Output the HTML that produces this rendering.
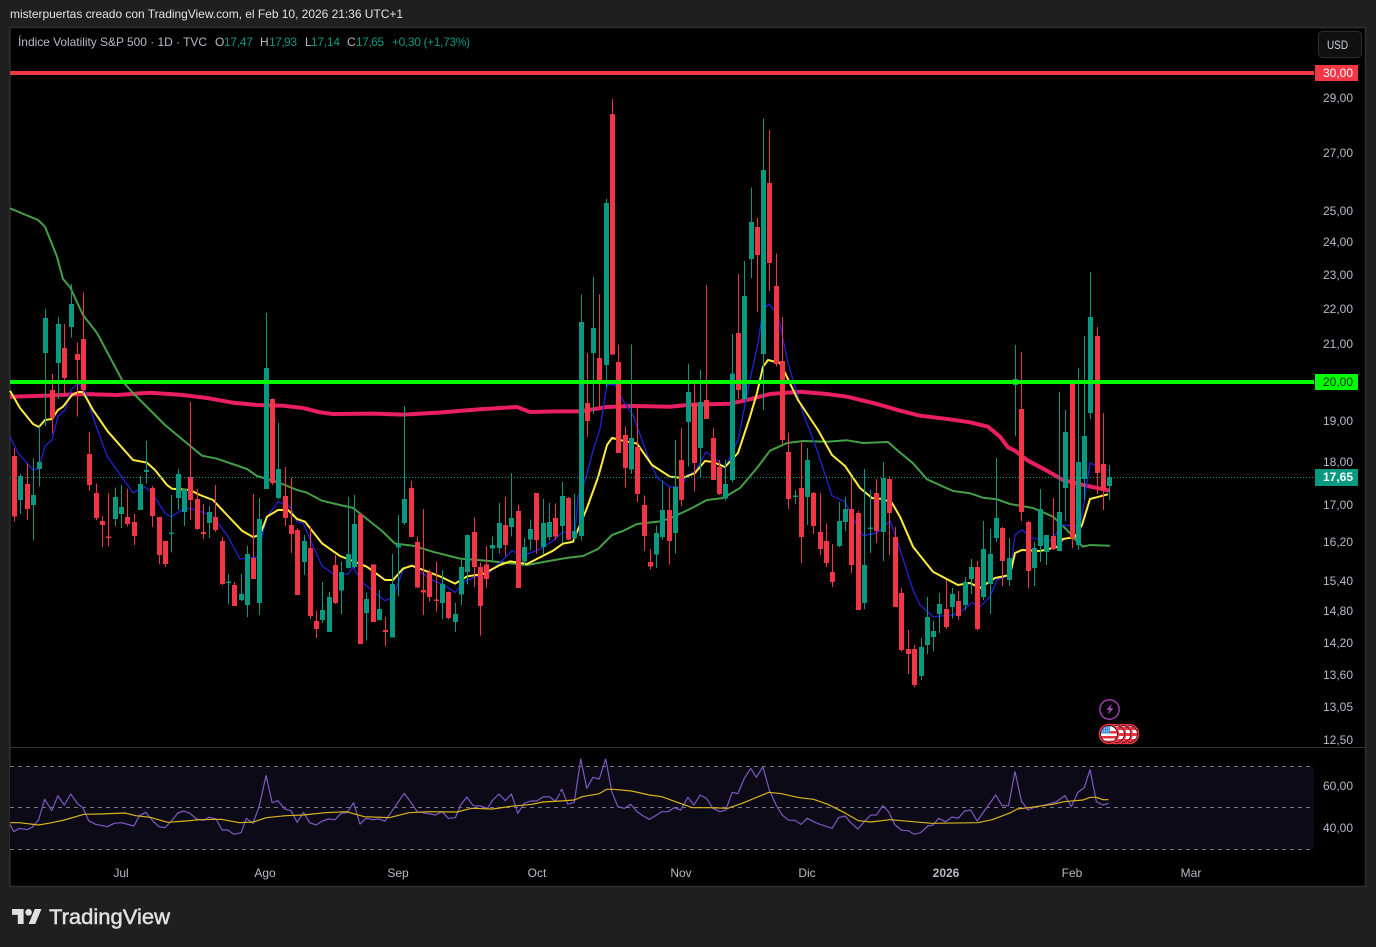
<!DOCTYPE html>
<html><head><meta charset="utf-8"><title>VIX</title>
<style>
html,body{margin:0;padding:0;background:#1f1f1f;width:1376px;height:947px;overflow:hidden}
svg{display:block;font-family:"Liberation Sans",sans-serif}
path,polyline{fill:none}
.w{stroke-width:1;vector-effect:non-scaling-stroke;shape-rendering:crispEdges}
.b{stroke-width:5;vector-effect:non-scaling-stroke;shape-rendering:crispEdges}
.r{stroke:#f23645}.g{stroke:#089981}
.ax text{font-size:12px;fill:#b8bbc4}
.t text{font-size:12px;fill:#b8bbc4;text-anchor:middle}
.lg{font-size:12px}
.rs{stroke-width:1.2;vector-effect:non-scaling-stroke;stroke-linejoin:round}
</style></head><body>
<svg width="1376" height="947" viewBox="0 0 1376 947" xmlns="http://www.w3.org/2000/svg">
<rect width="1376" height="947" fill="#1f1f1f"/>
<text x="10" y="18" font-size="12" fill="#e2e2e2" textLength="393" lengthAdjust="spacing">misterpuertas creado con TradingView.com, el Feb 10, 2026 21:36 UTC+1</text>
<rect x="10" y="27.5" width="1355.5" height="859" fill="#000" stroke="#2e2e2e" stroke-width="1.5"/>

<!-- moving averages -->
<polyline stroke="#e91e63" stroke-width="4" stroke-linejoin="round" points="10,396.7 43,395.7 83,394 117,395 150,392.7 180,394.7 207,398 233,402.7 257,405 283,405.7 303,408 320,412.3 333,414 373,413.6 403,414.6 440,412.5 480,409.3 517,407 530,412 557,411.4 580,411.4 607,407 633,406 670,406.7 690,404.7 730,403.7 750,399.3 770,394 800,391.7 827,394 847,396.7 877,404 900,410.7 920,415.7 950,419.3 970,422.3 988,426.7 1000,436.7 1008,447.3 1015,450.7 1028,460.7 1047,470.7 1063,480 1083,485 1110,490.7"/>
<polyline stroke="#43a047" stroke-width="2" stroke-linejoin="round" points="10,208.3 38,220 45,226.7 57,256.7 63,279 70,287 83,315 97,333 123,381.7 133,393 165,425 177,435 202,455.7 217,458.7 247,469 257,476 280,483 297,490 307,492.7 322,500.7 340,505 353,507.9 382,531 395,543.6 413,545.7 433,551.8 460,558.6 487,560.7 507,563 527,565 547,561.4 567,557.9 583,556 598,549 612,535 623,531 637,524 660,521.4 670,518.3 690,509 707,500 723,498 740,488 757,468 770,450.7 787,443 803,441 827,441.7 847,440.3 863,443 888,442 897,450 913,463.3 927,479.3 953,491 970,493.3 983,497.7 997,499.3 1010,504 1033,508 1053,516.7 1067,530 1077,541.7 1083,546.7 1090,545 1110,545.7"/>
<polyline stroke="#2222d8" stroke-width="1.3" stroke-linejoin="round" points="10,436.7 18,453 33,470 39,468.7 45,446 52,440 58,416.7 65,410 71,390 78,383 85,390.7 95,423 107,456 133,492.7 145,487 152,493 165,513 171,517 185,508 197,510 213,516.7 227,535 240,559 257,557 267,516.7 278,501.7 290,506.7 297,521.7 303,523 322,566 335,575 348,574 353,567 363,583 385,600.7 393,597 403,570 411,565 430,579 443,584.6 455,592.5 465,581 490,572 503,559.6 512,550.7 523,556 540,549 553,540.7 563,532 575,533 578,497 585,481 593,450.7 600,429 607,384.6 615,384.6 623,400.7 633,415 647,454 657,477.5 670,487 682,487 687,475 695,472 706,452 717,460 725,468 738,440 750,380 758,343 763,310 769,304 778,315 788,363 802,410 817,450 832,495.7 845,501.7 853,518 863,535.7 877,533 890,520.7 897,540 913,590 920,605 933,616.7 953,615 963,610 972,602.7 980,606.7 990,596.7 997,580 1010,575 1015,535 1022,530 1032,538 1050,541 1063,525 1080,526.7 1085,496.7 1090,463 1108,470.7"/>
<polyline stroke="#ffeb3b" stroke-width="2" stroke-linejoin="round" points="10,390.7 20,408 33,424 39,427 45,420 52,419 58,410 63,406.7 72,395 78,392 83,392 93,410 108,431.7 133,460 147,462.7 155,470 167,485 172,488.7 190,490 200,495 213,500 227,515 242,530.7 253,537 260,535 267,516.7 278,510 288,510 297,519 305,521.7 322,543.3 340,556 353,561 367,566.8 385,580 393,580 403,568.6 412,565.7 440,576.4 455,583.6 467,576.4 483,574 500,565 510,561.4 527,564 553,550.7 563,543.6 573,541.8 587,507.9 598,477.5 607,445 612,437.9 623,440.7 637,443.6 652,465 670,476.7 683,478 695,473 705,461 713,462 725,467 738,453 750,416.7 757,393 763,366.7 768,360 780,363 785,373 798,400 818,430 832,455 845,466 860,488 872,498 883,499 892,503 900,516.7 913,546.7 933,571.7 958,585 970,583 980,588 995,578 1010,575 1015,553 1022,550 1040,551 1057,547 1063,539 1075,537 1082,525 1090,499 1108,494.3"/>

<!-- candles -->
<g transform="translate(0,200) scale(1,0.33333)">
<path class="w r" d="M14.5 745V965M27.5 790V960M52.5 522V700M64.5 372V590M77.5 427V650M83.5 277V580M89.5 696V872M96.5 850V960M102.5 948V1041M108.5 879V1040M127.5 867V980M134.5 942V1035M152.5 858V981M159.5 951V1092M165.5 1023V1101M190.5 606V960M197.5 867V990M203.5 912V1017M215.5 855V996M222.5 1011V1155M234.5 1146V1218M253.5 882V1137M272.5 595V855M285.5 801V978M291.5 834V1059M297.5 984V1185M310.5 978V1257M316.5 1233V1314M335.5 1065V1212"/>
<path class="w g" d="M20.5 822V942M33.5 775V1022M39.5 680V860M45.5 327V678M58.5 351V597M71.5 252V413M115.5 862V978M121.5 855V984M140.5 828V930M146.5 723V850M171.5 885V1058M178.5 807V930M184.5 867V978M209.5 918V1014M228.5 1122V1212M241.5 1122V1203M247.5 1038V1251M259.5 894V1245M266.5 339V867M278.5 669V897M304.5 1005V1125M322.5 1146V1269M329.5 1176V1296"/>
<path class="b r" d="M14.5 768V950M27.5 852V927M52.5 570V652M64.5 444V534M77.5 462V480M83.5 417V570M89.5 762V855M96.5 879V954M102.5 963V975M108.5 1010V1014M127.5 951V972M134.5 966V1008M152.5 864V948M159.5 951V1065M165.5 1023V1092M190.5 831V900M197.5 897V987M203.5 996V1002M215.5 951V990M222.5 1023V1152M234.5 1155V1218M253.5 1074V1137M272.5 597V849M285.5 888V954M291.5 975V1002M297.5 990V1185M310.5 1044V1248M316.5 1263V1287M335.5 1095V1209"/>
<path class="b g" d="M20.5 828V900M33.5 885V915M39.5 786V807M45.5 354V459M58.5 372V489M71.5 312V381M115.5 891V957M121.5 921V942M140.5 852V930M146.5 810V816M171.5 998V1002M178.5 822V894M184.5 867V936M209.5 936V969M228.5 1145V1149M241.5 1182V1200M247.5 1062V1215M259.5 957V1209M266.5 504V867M278.5 807V894M304.5 1023V1086M322.5 1230V1260M329.5 1191V1296"/>
</g>
<g transform="translate(0,90) scale(1,0.35714)">
<path class="w r" d="M360.5 1185V1551M373.5 1328V1490M385.5 1476V1558M411.5 1095V1252M417.5 1250V1395M423.5 1173V1470M429.5 1343V1432M436.5 1320V1460M448.5 1404V1482M474.5 1197V1392M480.5 1323V1528M486.5 1277V1395M505.5 1140V1305M518.5 1160V1394M536.5 1128V1298M555.5 1158V1260M568.5 1140V1260M587.5 736V972M599.5 572V888M612.5 25V742M618.5 712V1016M625.5 942V1113M637.5 884V1153M644.5 1135V1291M650.5 1285V1343M669.5 1113V1329"/>
<path class="w g" d="M341.5 1320V1467M348.5 1140V1340M354.5 1134V1340M366.5 1407V1542M379.5 1400V1485M392.5 1299V1533M398.5 1190V1418M404.5 885V1218M442.5 1344V1482M455.5 1437V1517M461.5 1316V1442M467.5 1245V1385M492.5 1250V1320M499.5 1157V1298M511.5 1072V1250M524.5 1255V1330M530.5 1202V1290M543.5 1145V1300M549.5 1157V1262M562.5 1098V1268M574.5 1131V1260M581.5 572V1262M593.5 524V907M606.5 305V834M631.5 712V1075M656.5 1220V1338M662.5 1093V1258"/>
<path class="b r" d="M360.5 1188V1551M373.5 1328V1490M385.5 1512V1518M411.5 1115V1252M417.5 1266V1393M423.5 1400V1407M429.5 1350V1420M436.5 1427V1431M448.5 1406V1479M474.5 1238V1336M480.5 1336V1445M486.5 1328V1369M505.5 1218V1274M518.5 1179V1394M536.5 1128V1260M555.5 1198V1250M568.5 1142V1258M587.5 876V927M599.5 750V812M612.5 67V740M618.5 762V1016M625.5 966V1058M637.5 1000V1131M644.5 1162V1249M650.5 1322V1334M669.5 1176V1263"/>
<path class="b g" d="M341.5 1350V1402M348.5 1299V1338M354.5 1215V1335M366.5 1425V1464M379.5 1453V1484M392.5 1383V1533M398.5 1272V1281M404.5 1145V1212M442.5 1383V1436M455.5 1467V1490M461.5 1336V1413M467.5 1246V1350M492.5 1274V1284M499.5 1212V1282M511.5 1198V1224M524.5 1280V1320M530.5 1229V1258M543.5 1212V1280M549.5 1210V1252M562.5 1137V1221M574.5 1235V1254M581.5 650V1249M593.5 666V736M606.5 316V770M631.5 974V1063M656.5 1240V1301M662.5 1176V1252"/>
</g>
<g transform="translate(0,110) scale(1,0.33333)">
<path class="w r" d="M681.5 954V1188M694.5 823V1145M706.5 525V927M713.5 954V1110M719.5 1050V1155M738.5 492V867M757.5 324V606M769.5 60V543M776.5 430V770M782.5 621V1005M788.5 969V1197M801.5 993V1359M813.5 1146V1272M820.5 1149V1335M826.5 1240V1371M832.5 1302V1431M851.5 1104V1389M858.5 1203V1500M876.5 1107V1299M889.5 1098V1335M895.5 1251V1491"/>
<path class="w g" d="M675.5 990V1331M688.5 762V1070M700.5 780V1104M725.5 1050V1172M732.5 672V1118M744.5 453V875M751.5 232V504M763.5 25V900M795.5 1140V1182M807.5 1014V1245M839.5 1176V1311M845.5 1161V1263M864.5 1077V1497M870.5 1140V1329M883.5 1056V1353"/>
<path class="b r" d="M681.5 1050V1170M694.5 880V1059M706.5 870V927M713.5 984V1110M719.5 1071V1152M738.5 669V840M757.5 351V435M769.5 219V459M776.5 528V762M782.5 753V990M788.5 1026V1167M801.5 1134V1281M813.5 1149V1248M820.5 1266V1317M826.5 1293V1359M832.5 1386V1416M851.5 1197V1365M858.5 1209V1500M876.5 1149V1263M889.5 1107V1209M895.5 1281V1491"/>
<path class="b g" d="M675.5 1131V1269M688.5 846V936M700.5 876V1014M725.5 1122V1165M732.5 790V1110M744.5 558V867M751.5 336V447M763.5 180V732M795.5 1157V1161M807.5 1050V1161M839.5 1233V1308M845.5 1197V1236M864.5 1365V1479M870.5 1253V1257M883.5 1104V1266"/>
</g>
<g transform="translate(0,260) scale(1,0.33333)">
<path class="w r" d="M901.5 984V1175M908.5 1110V1242M914.5 1155V1283M946.5 960V1107M958.5 993V1080M977.5 903V1112M1002.5 801V978M1021.5 276V783M1028.5 783V984M1053.5 714V870M1072.5 372V864M1097.5 201V702M1103.5 459V750"/>
<path class="w g" d="M921.5 1134V1260M927.5 1011V1182M933.5 1083V1175M939.5 999V1119M952.5 984V1076M965.5 951V1050M971.5 897V1002M983.5 783V1020M990.5 807V1062M996.5 594V846M1009.5 834V978M1015.5 255V528M1034.5 846V978M1040.5 687V906M1046.5 825V915M1059.5 396V873M1065.5 450V783M1078.5 324V870M1084.5 228V720M1090.5 36V477M1109.5 615V720"/>
<path class="b r" d="M901.5 999V1170M908.5 1167V1182M914.5 1167V1275M946.5 1047V1101M958.5 1023V1068M977.5 921V1107M1002.5 804V903M1021.5 447V756M1028.5 786V933M1053.5 828V867M1072.5 372V834M1097.5 228V639M1103.5 612V690"/>
<path class="b g" d="M921.5 1161V1248M927.5 1071V1155M933.5 1113V1131M939.5 1032V1062M952.5 1002V1041M965.5 966V1035M971.5 921V957M983.5 867V1011M990.5 882V972M996.5 774V834M1009.5 894V960M1015.5 357V375M1034.5 864V924M1040.5 747V858M1046.5 825V876M1059.5 756V873M1065.5 516V684M1078.5 606V855M1084.5 528V657M1090.5 171V459M1109.5 651V678"/>
</g>

<!-- horizontal lines -->
<rect x="10" y="71" width="1304" height="4" fill="#f23645"/>
<rect x="10" y="380" width="1304" height="4" fill="#00ff00"/>
<path d="M10 477.5H1314" stroke="#089981" stroke-dasharray="1 2" stroke-width="1"/>

<!-- legend -->
<g class="lg" fill="#b8bbc4">
<text x="18" y="46" textLength="189" lengthAdjust="spacing">Índice Volatility S&amp;P 500 · 1D · TVC</text>
<text x="215" y="46">O</text><text x="224" y="46" fill="#089981" textLength="29" lengthAdjust="spacing">17,47</text>
<text x="260" y="46">H</text><text x="269" y="46" fill="#089981" textLength="28" lengthAdjust="spacing">17,93</text>
<text x="305" y="46">L</text><text x="311" y="46" fill="#089981" textLength="29" lengthAdjust="spacing">17,14</text>
<text x="347" y="46">C</text><text x="356" y="46" fill="#089981" textLength="28" lengthAdjust="spacing">17,65</text>
<text x="392" y="46" fill="#089981" textLength="78" lengthAdjust="spacing">+0,30 (+1,73%)</text>
</g>
<rect x="1318.5" y="31.5" width="43" height="26" rx="4" fill="#101010" stroke="#2e2e2e"/>
<text x="1327" y="49" font-size="12" fill="#d1d4dc" textLength="21" lengthAdjust="spacingAndGlyphs">USD</text>

<!-- price axis -->
<g class="ax" transform="translate(0,1)">
<text x="1323" y="101">29,00</text><text x="1323" y="156">27,00</text><text x="1323" y="214">25,00</text><text x="1323" y="245">24,00</text><text x="1323" y="278">23,00</text><text x="1323" y="312">22,00</text><text x="1323" y="347">21,00</text><text x="1323" y="424">19,00</text><text x="1323" y="465">18,00</text><text x="1323" y="508">17,00</text><text x="1323" y="545">16,20</text><text x="1323" y="584">15,40</text><text x="1323" y="614">14,80</text><text x="1323" y="646">14,20</text><text x="1323" y="678">13,60</text><text x="1323" y="710">13,05</text><text x="1323" y="743">12,50</text>
<text x="1323" y="789">60,00</text><text x="1323" y="831">40,00</text>
</g>
<rect x="1315" y="65" width="43" height="16" fill="#f23645"/>
<text x="1323" y="77" font-size="12" fill="#fff">30,00</text>
<rect x="1315" y="374" width="43" height="16" fill="#00ff00"/>
<text x="1323" y="386" font-size="12" fill="#0b2a12">20,00</text>
<rect x="1315" y="469" width="43" height="17" fill="#089981"/>
<text x="1323" y="481" font-size="12" font-weight="bold" fill="#fff" textLength="30" lengthAdjust="spacing">17,65</text>

<!-- event icons -->
<circle cx="1109.5" cy="709.5" r="9.7" fill="#000" stroke="#9c3fb0" stroke-width="1.5"/>
<path d="M1112 703.5l-5.5 6.5h3.2l-2 5 5.8-6.8h-3.2z" style="fill:#ab47bc"/>
<clipPath id="f1"><circle cx="1129" cy="734" r="8"/></clipPath>
<clipPath id="f2"><circle cx="1122.5" cy="734" r="8"/></clipPath>
<clipPath id="f3"><circle cx="1116" cy="734" r="8"/></clipPath>
<clipPath id="f4"><circle cx="1109" cy="734" r="8"/></clipPath>
<g>
<circle cx="1129" cy="734" r="9.5" fill="#000" stroke="#f23645" stroke-width="1.6"/>
<g clip-path="url(#f1)"><rect x="1120" y="725" width="18" height="18" fill="#fff"/><rect x="1120" y="727" width="18" height="3" fill="#e8323f"/><rect x="1120" y="733" width="18" height="3" fill="#e8323f"/><rect x="1120" y="739" width="18" height="3" fill="#e8323f"/></g>
<circle cx="1122.5" cy="734" r="9.5" fill="#000" stroke="#f23645" stroke-width="1.6"/>
<g clip-path="url(#f2)"><rect x="1114" y="725" width="18" height="18" fill="#fff"/><rect x="1114" y="727" width="18" height="3" fill="#e8323f"/><rect x="1114" y="733" width="18" height="3" fill="#e8323f"/><rect x="1114" y="739" width="18" height="3" fill="#e8323f"/></g>
<circle cx="1116" cy="734" r="9.5" fill="#000" stroke="#f23645" stroke-width="1.6"/>
<g clip-path="url(#f3)"><rect x="1107" y="725" width="18" height="18" fill="#fff"/><rect x="1107" y="727" width="18" height="3" fill="#e8323f"/><rect x="1107" y="733" width="18" height="3" fill="#e8323f"/><rect x="1107" y="739" width="18" height="3" fill="#e8323f"/></g>
<circle cx="1109" cy="734" r="9.5" fill="#000" stroke="#f23645" stroke-width="1.6"/>
<g clip-path="url(#f4)"><rect x="1100" y="725" width="18" height="18" fill="#fff"/><rect x="1100" y="731" width="18" height="2.5" fill="#e8323f"/><rect x="1100" y="736" width="18" height="2.5" fill="#e8323f"/><rect x="1100" y="740.5" width="18" height="2.5" fill="#e8323f"/><rect x="1100" y="725" width="10" height="8.5" fill="#3f8fe0"/><path d="M1102 728h7M1102 731h7" stroke="#d5e8fa" stroke-width="1" stroke-dasharray="1 1"/></g>
</g>

<!-- RSI pane -->
<path d="M10 747.5H1365.5" stroke="#2f333e" stroke-width="1"/>
<rect x="10" y="767" width="1304" height="82" fill="#0d0a17"/>
<path d="M10 766.5H1314M10 807.5H1314M10 849.5H1314" stroke="#787586" stroke-width="1" stroke-dasharray="4 4"/>
<g transform="translate(0,745) scale(0.35714,0.33333)">
<polyline class="rs" stroke="#7e57c2" points="28,238 38,260 55,250 75,254 90,247 108,225 125,163 145,197 162,152 180,180 198,147 218,177 232,188 248,227 268,238 300,245 320,235 340,233 375,243 390,212 408,202 430,230 445,245 462,248 480,228 498,204 515,198 532,205 550,222 570,226 585,217 605,222 622,255 638,255 655,268 675,263 690,220 708,235 725,187 745,92 762,173 778,167 797,192 815,197 832,232 850,202 867,233 885,240 903,228 920,222 938,224 955,205 972,203 990,173 1008,237 1025,220 1045,224 1060,222 1078,228 1132,145 1148,168 1168,200 1220,210 1238,200 1255,220 1275,218 1290,180 1307,156 1325,182 1345,183 1365,190 1380,165 1397,147 1415,167 1432,147 1450,205 1468,175 1485,168 1503,168 1520,156 1538,155 1555,168 1568,145"/>
<polyline class="rs" stroke="#d8b41e" points="28,233 55,233 108,240 145,233 180,225 235,208 280,207 350,204 380,212 420,217 470,232 520,228 560,224 620,223 670,233 710,231 745,218 800,212 850,210 910,203 970,200 1020,215 1090,218 1145,203 1200,200 1280,201 1320,190 1380,192 1430,184 1490,178 1520,171 1568,168"/>
</g>
<g transform="translate(560,745) scale(0.35714,0.33333)">
<polyline class="rs" stroke="#7e57c2" points="0,140 5,133 22,178 40,172 58,42 75,130 92,97 110,102 128,42 145,140 162,185 180,190 198,178 216,200 233,213 250,223 268,212 285,200 303,200 320,188 338,195 358,157 375,180 392,150 410,160 428,190 448,200 464,195 482,142 498,146 516,100 534,70 550,97 568,65 586,135 605,180 622,210 640,226 658,226 675,238 692,220 710,230 728,238 762,250 780,218 798,213 816,235 834,252 852,230 870,210 886,210 904,182 920,200 938,240 958,256 975,257 992,268 1010,263 1030,243 1045,240 1060,220 1080,230 1098,216 1115,220 1133,198 1150,195 1168,228 1220,150 1238,182 1256,182 1274,80 1292,168 1310,195 1328,187 1365,178 1390,170 1414,152 1432,185 1450,142 1468,128 1484,74 1502,170 1520,180 1536,175"/>
<polyline class="rs" stroke="#d8b41e" points="0,168 40,165 62,155 110,146 130,133 150,133 200,138 250,150 285,155 310,165 370,188 420,188 470,190 510,175 585,142 620,146 670,158 710,163 750,178 800,205 835,227 870,231 925,224 1040,235 1170,233 1210,224 1260,204 1280,192 1320,187 1380,178 1410,170 1465,165 1485,157 1502,157 1520,164 1536,164"/>
</g>

<!-- time axis -->
<g class="t">
<text x="121" y="877">Jul</text><text x="265" y="877">Ago</text><text x="398" y="877">Sep</text><text x="537" y="877">Oct</text><text x="681" y="877">Nov</text><text x="807" y="877">Dic</text><text x="946" y="877" font-weight="bold">2026</text><text x="1072" y="877">Feb</text><text x="1191" y="877">Mar</text>
</g>

<!-- logo -->
<g transform="translate(12,905.7) scale(0.83)" >
<path d="M14 22H7V11H0V4h14v18zM28 22h-8l7.5-18h8L28 22z" style="fill:#e0e0e0"/>
<circle cx="20" cy="8" r="4" fill="#e0e0e0"/>
</g>
<text x="49" y="924" font-size="21" fill="#e0e0e0" stroke="#e0e0e0" stroke-width="0.5" textLength="121" lengthAdjust="spacingAndGlyphs">TradingView</text>
</svg>
</body></html>
